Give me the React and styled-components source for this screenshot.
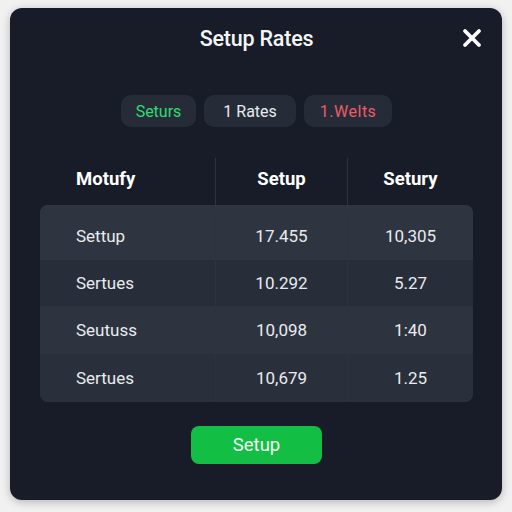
import React from "react";
import styled, { createGlobalStyle } from "styled-components";

const Global = createGlobalStyle`
  html, body {
    margin: 0;
    padding: 0;
    background: #f1f1f1;
    font-family: Roboto, "Liberation Sans", sans-serif;
  }
`;

const Page = styled.div`
  width: 512px;
  height: 512px;
  padding: 8px 10px 12px 10px;
  box-sizing: border-box;
`;

const Card = styled.div`
  height: 492px;
  background: #171c28;
  border-radius: 12px;
  box-shadow: 0 2px 8px rgba(0, 0, 0, 0.25);
  display: flex;
  flex-direction: column;
  align-items: center;
  padding: 0 29px 0 30px;
  box-sizing: border-box;
`;

const Header = styled.div`
  width: 100%;
  display: grid;
  grid-template-columns: 1fr auto 1fr;
  align-items: center;
  height: 60px;
`;

const Title = styled.h1`
  grid-column: 2;
  margin: 0;
  font-size: 21.5px;
  font-weight: 500;
  color: #f3f4f6;
  letter-spacing: -0.2px;
`;

const Close = styled.button`
  justify-self: end;
  margin-right: -11px;
  width: 24px;
  height: 24px;
  padding: 0;
  background: none;
  border: 0;
  display: flex;
  align-items: center;
  justify-content: center;
`;

const Tabs = styled.div`
  display: flex;
  gap: 8px;
  margin-top: 27px;
`;

const Tab = styled.div`
  height: 32px;
  padding: 0 ${(p) => p.$pad}px;
  border-radius: 10px;
  background: #252c38;
  color: ${(p) => p.$color};
  font-size: 16px;
  letter-spacing: ${(p) => p.$ls || 0}px;
  display: flex;
  align-items: center;
`;

const Table = styled.div`
  width: 100%;
  margin-top: 31px;
  display: flex;
  flex-direction: column;
`;

const Row = styled.div`
  display: grid;
  grid-template-columns: 175px 132px 1fr;
  height: ${(p) => p.$h}px;
  box-sizing: border-box;
  padding-top: ${(p) => p.$top || 0}px;
  background: ${(p) => p.$bg || "transparent"};
`;

const Body = styled.div`
  border-radius: 8px;
  overflow: hidden;
  background: #2b323e;
`;

const Cell = styled.div`
  display: flex;
  align-items: center;
  justify-content: ${(p) => (p.$left ? "flex-start" : "center")};
  padding-left: ${(p) => (p.$left ? "36px" : "0")};
  border-left: ${(p) => (p.$div ? "1px solid #2c333f" : "0")};
  color: ${(p) => (p.$head ? "#ffffff" : "#e9ebef")};
  font-size: ${(p) => (p.$head ? "18.5px" : "17px")};
  font-weight: ${(p) => (p.$head ? 700 : 400)};
  ${(p) => (p.$head ? "padding-bottom: 5px;" : "")}
`;

const Action = styled.button`
  margin-top: 24px;
  width: 131px;
  height: 38px;
  border: 0;
  border-radius: 8px;
  background: #13be44;
  color: #f4fff6;
  font-family: Roboto, "Liberation Sans", sans-serif;
  font-size: 18.5px;
`;

const rows = [
  { name: "Settup", a: "17.455", b: "10,305", h: 55, top: 6, bg: "#2e3541" },
  { name: "Sertues", a: "10.292", b: "5.27", h: 46, bg: "#272e39" },
  { name: "Seutuss", a: "10,098", b: "1:40", h: 48, bg: "#2d343f" },
  { name: "Sertues", a: "10,679", b: "1.25", h: 48, bg: "#29303b" },
];

export default function App() {
  return (
    <>
      <Global />
      <Page>
        <Card>
          <Header>
            <Title>Setup Rates</Title>
            <Close aria-label="close">
              <svg width="20" height="20" viewBox="0 0 20 20">
                <path d="M3 3 L17 17 M17 3 L3 17" stroke="#fff" strokeWidth="3.8" strokeLinecap="round" />
              </svg>
            </Close>
          </Header>
          <Tabs>
            <Tab $color="#2fdc6e" $pad={15}>Seturs</Tab>
            <Tab $color="#e8eaee" $pad={19}>1 Rates</Tab>
            <Tab $color="#ee5a66" $pad={16} $ls={0.5}>1.Welts</Tab>
          </Tabs>
          <Table>
            <Row $h={47}>
              <Cell $head $left>Motufy</Cell>
              <Cell $head $div>Setup</Cell>
              <Cell $head $div>Setury</Cell>
            </Row>
            <Body>
              {rows.map((r, i) => (
                <Row key={i} $h={r.h} $top={r.top} $bg={r.bg}>
                  <Cell $left>{r.name}</Cell>
                  <Cell $div>{r.a}</Cell>
                  <Cell $div>{r.b}</Cell>
                </Row>
              ))}
            </Body>
          </Table>
          <Action>Setup</Action>
        </Card>
      </Page>
    </>
  );
}
